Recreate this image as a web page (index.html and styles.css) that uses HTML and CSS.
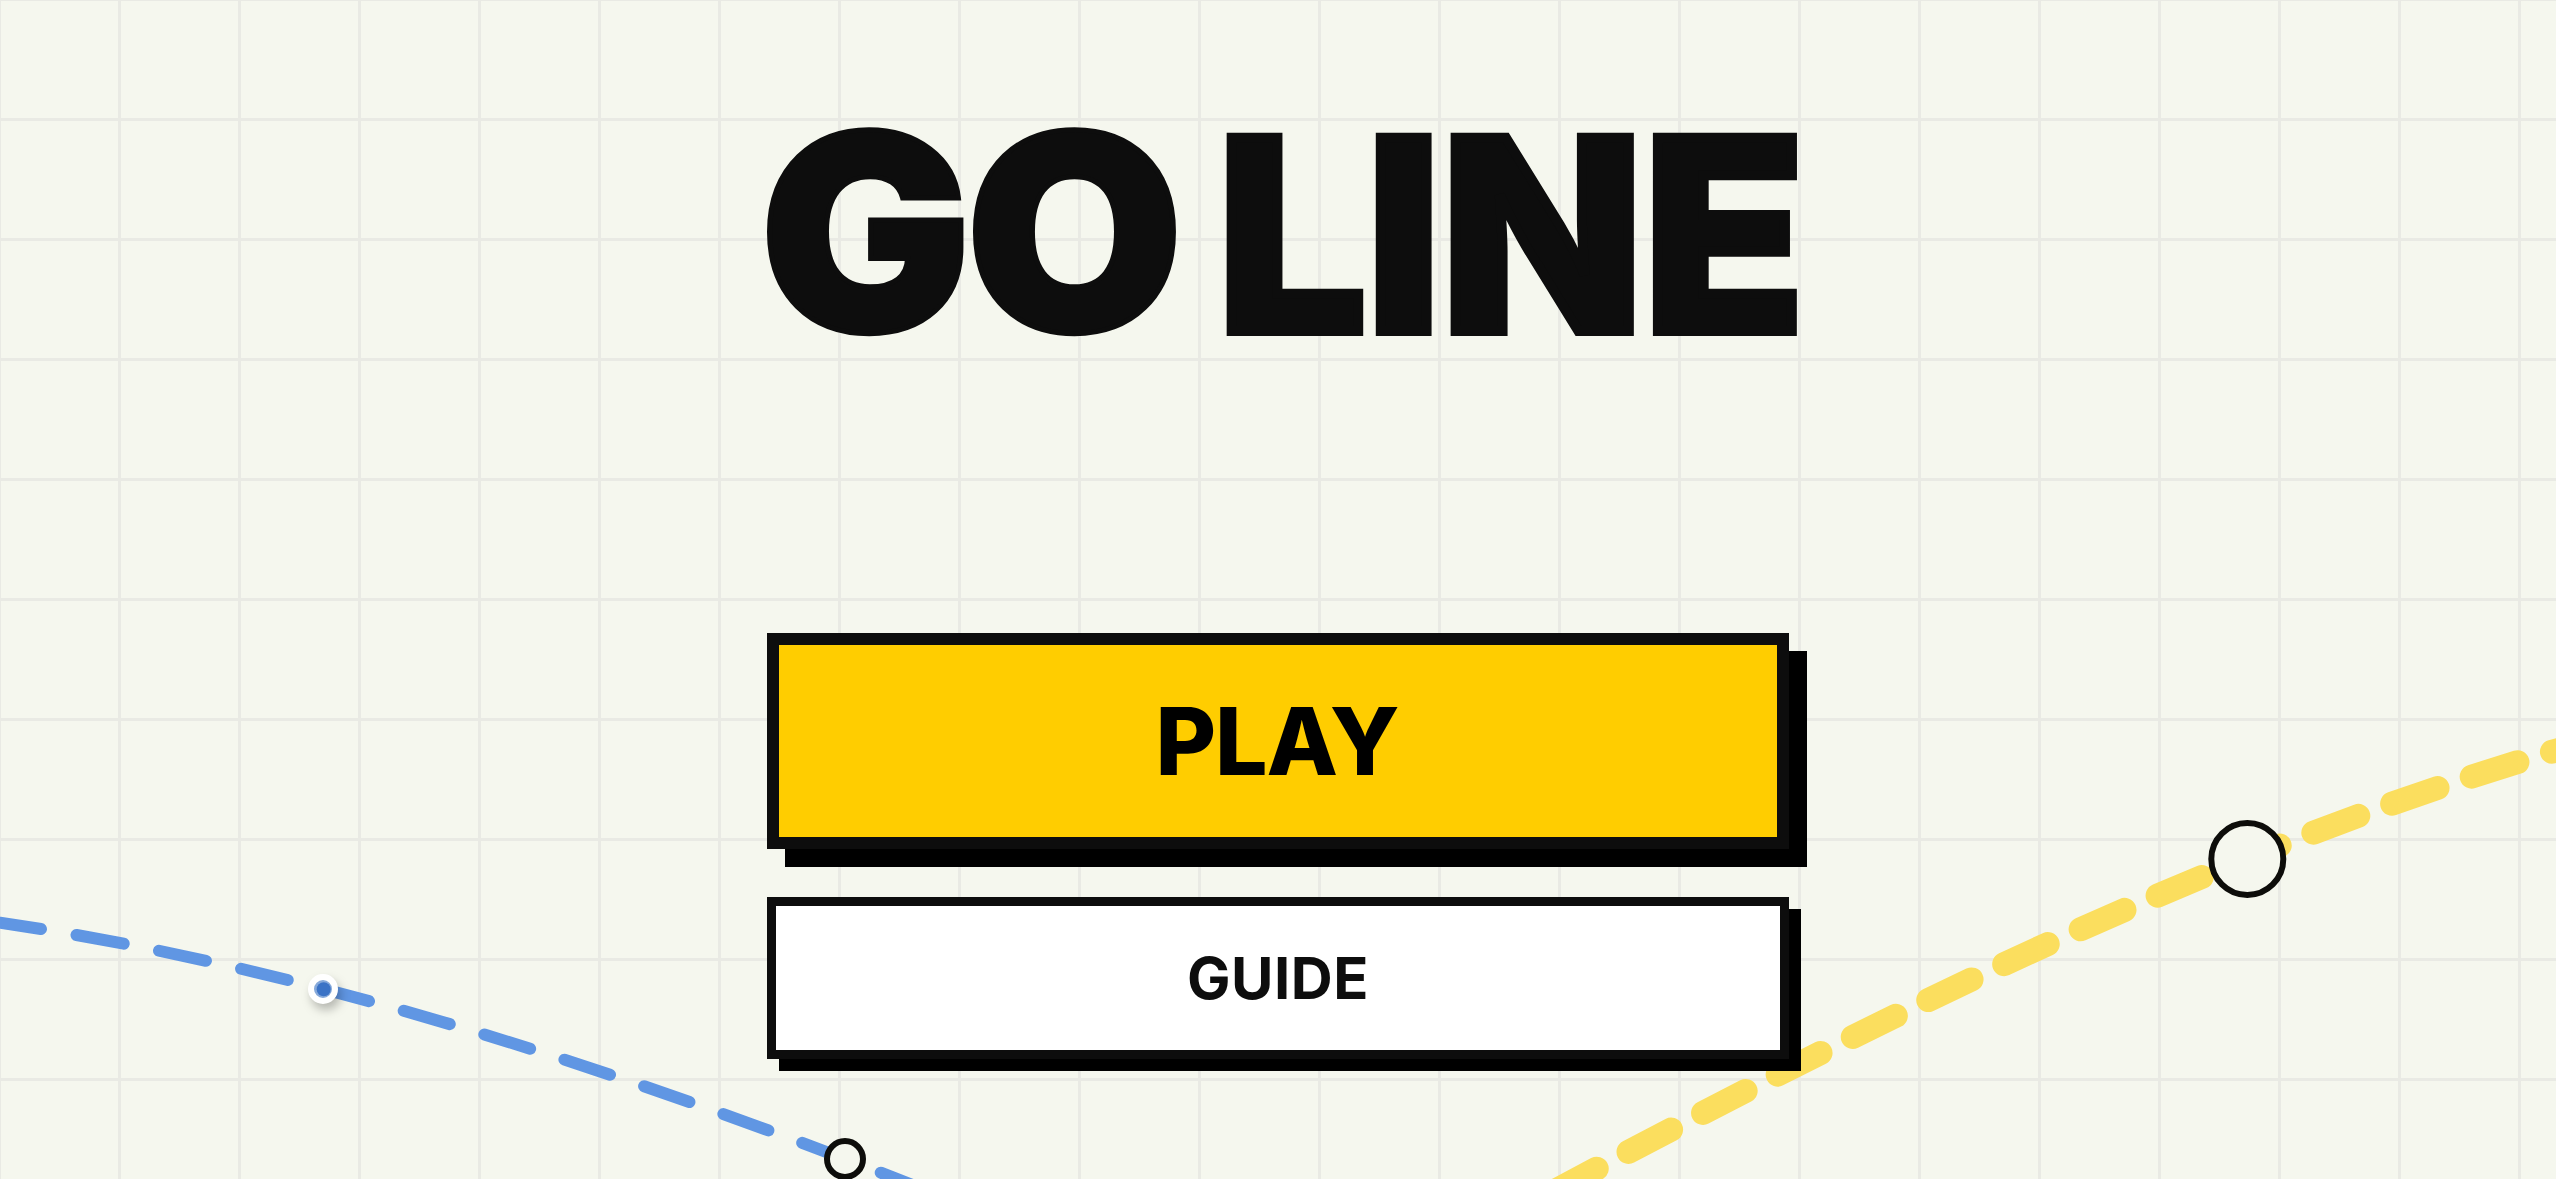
FILE: index.html
```
<!DOCTYPE html>
<html lang="en">
<head>
  <meta charset="UTF-8" />
  <meta name="viewport" content="width=device-width, initial-scale=1.0" />
  <title>Go Line</title>
  <link rel="stylesheet" href="styles.css">
</head>
<body>
  <!-- Transit lines behind the menu -->
  <svg class="map" viewBox="0 0 2556 1179" aria-hidden="true">
    <path class="line line-blue" d="M0 922.7C320 969.5 640 1076.8 960 1203.7" />
    <path class="line line-yellow" d="M1500 1220.4C1866.67 1023.1 2233.33 838.9 2600 738.1" />
    <circle class="station" cx="845" cy="1159" r="18" />
    <circle class="station" cx="2247.3" cy="859" r="36" />
    <g class="train">
      <circle class="train-ring" cx="323" cy="989" r="12" />
      <circle class="train-dot" cx="323.7" cy="989.3" r="7" />
    </g>
  </svg>

  <main class="menu">
    <h1 class="title"><span class="go">GO</span> <span class="word-line">LINE</span></h1>
    <div class="buttons">
      <button class="btn play-btn">PLAY</button>
      <button class="btn guide-btn">GUIDE</button>
    </div>
  </main>
</body>
</html>
```
FILE: styles.css
```
* {
  box-sizing: border-box;
}

body {
  margin: 0;
  height: 100vh;
  overflow: hidden;
  font-family: 'Inter', sans-serif;
  color: #0d0d0d;
  background-color: #f5f7ee;
  background-image:
    linear-gradient(#e9eae4 3px, transparent 3px),
    linear-gradient(90deg, #e9eae4 3px, transparent 3px);
  background-size: 120px 120px;
  background-position: -2px -2px;
}

/* Background map */
.map {
  position: absolute;
  top: 0;
  left: 0;
  width: 2556px;
  height: 1179px;
}

.line {
  fill: none;
  stroke-linecap: round;
  stroke-dasharray: 48 36;
}

.line-blue {
  stroke: #6096e3;
  stroke-width: 12;
  stroke-dashoffset: 6.5;
}

.line-yellow {
  stroke: #fbde5e;
  stroke-width: 24;
  stroke-dashoffset: 22.4;
}

.station {
  fill: #f5f7ee;
  stroke: #0d0d0a;
  stroke-width: 6;
}

.train {
  filter: drop-shadow(3px 6px 5px rgba(0, 0, 0, 0.25));
}

.train-ring {
  fill: #86a9da;
  stroke: #ffffff;
  stroke-width: 6;
}

.train-dot {
  fill: #3b73c6;
}

/* Menu */
.menu {
  position: relative;
  width: 1022px;
  margin: 0 auto;
  padding-top: 93px;
}

.title {
  display: flex;
  align-items: baseline;
  gap: 49px;
  height: 279px;
  margin: 0 0 0 -7px;
  line-height: 279px;
  white-space: nowrap;
}

/* The stroke makes the letters a bit heavier */
.go {
  font-size: 273px;
  font-weight: 900;
  letter-spacing: -5px;
  -webkit-text-stroke: 5px #0d0d0d;
  transform: scaleX(1.025);
  transform-origin: left;
}

.word-line {
  font-size: 265.5px;
  font-weight: 800;
  letter-spacing: -1px;
  -webkit-text-stroke: 10px #0d0d0d;
}

.buttons {
  display: flex;
  flex-direction: column;
  gap: 48px;
  margin-top: 261px;
}

.btn {
  width: 100%;
  padding: 0;
  font-family: inherit;
  border-style: solid;
  border-color: #0d0d0d;
  border-radius: 0;
  cursor: pointer;
}

.play-btn {
  height: 216px;
  padding-right: 2px;
  font-size: 93px;
  font-weight: 800;
  letter-spacing: -1px;
  color: #000000;
  background-color: #ffcd00;
  border-width: 12px;
  box-shadow: 18px 18px 0 #000000;
}

.guide-btn {
  height: 162px;
  font-size: 58px;
  font-weight: 700;
  letter-spacing: 0.5px;
  color: #0d0d0d;
  background-color: #ffffff;
  border-width: 9px;
  box-shadow: 12px 12px 0 #000000;
}
```
